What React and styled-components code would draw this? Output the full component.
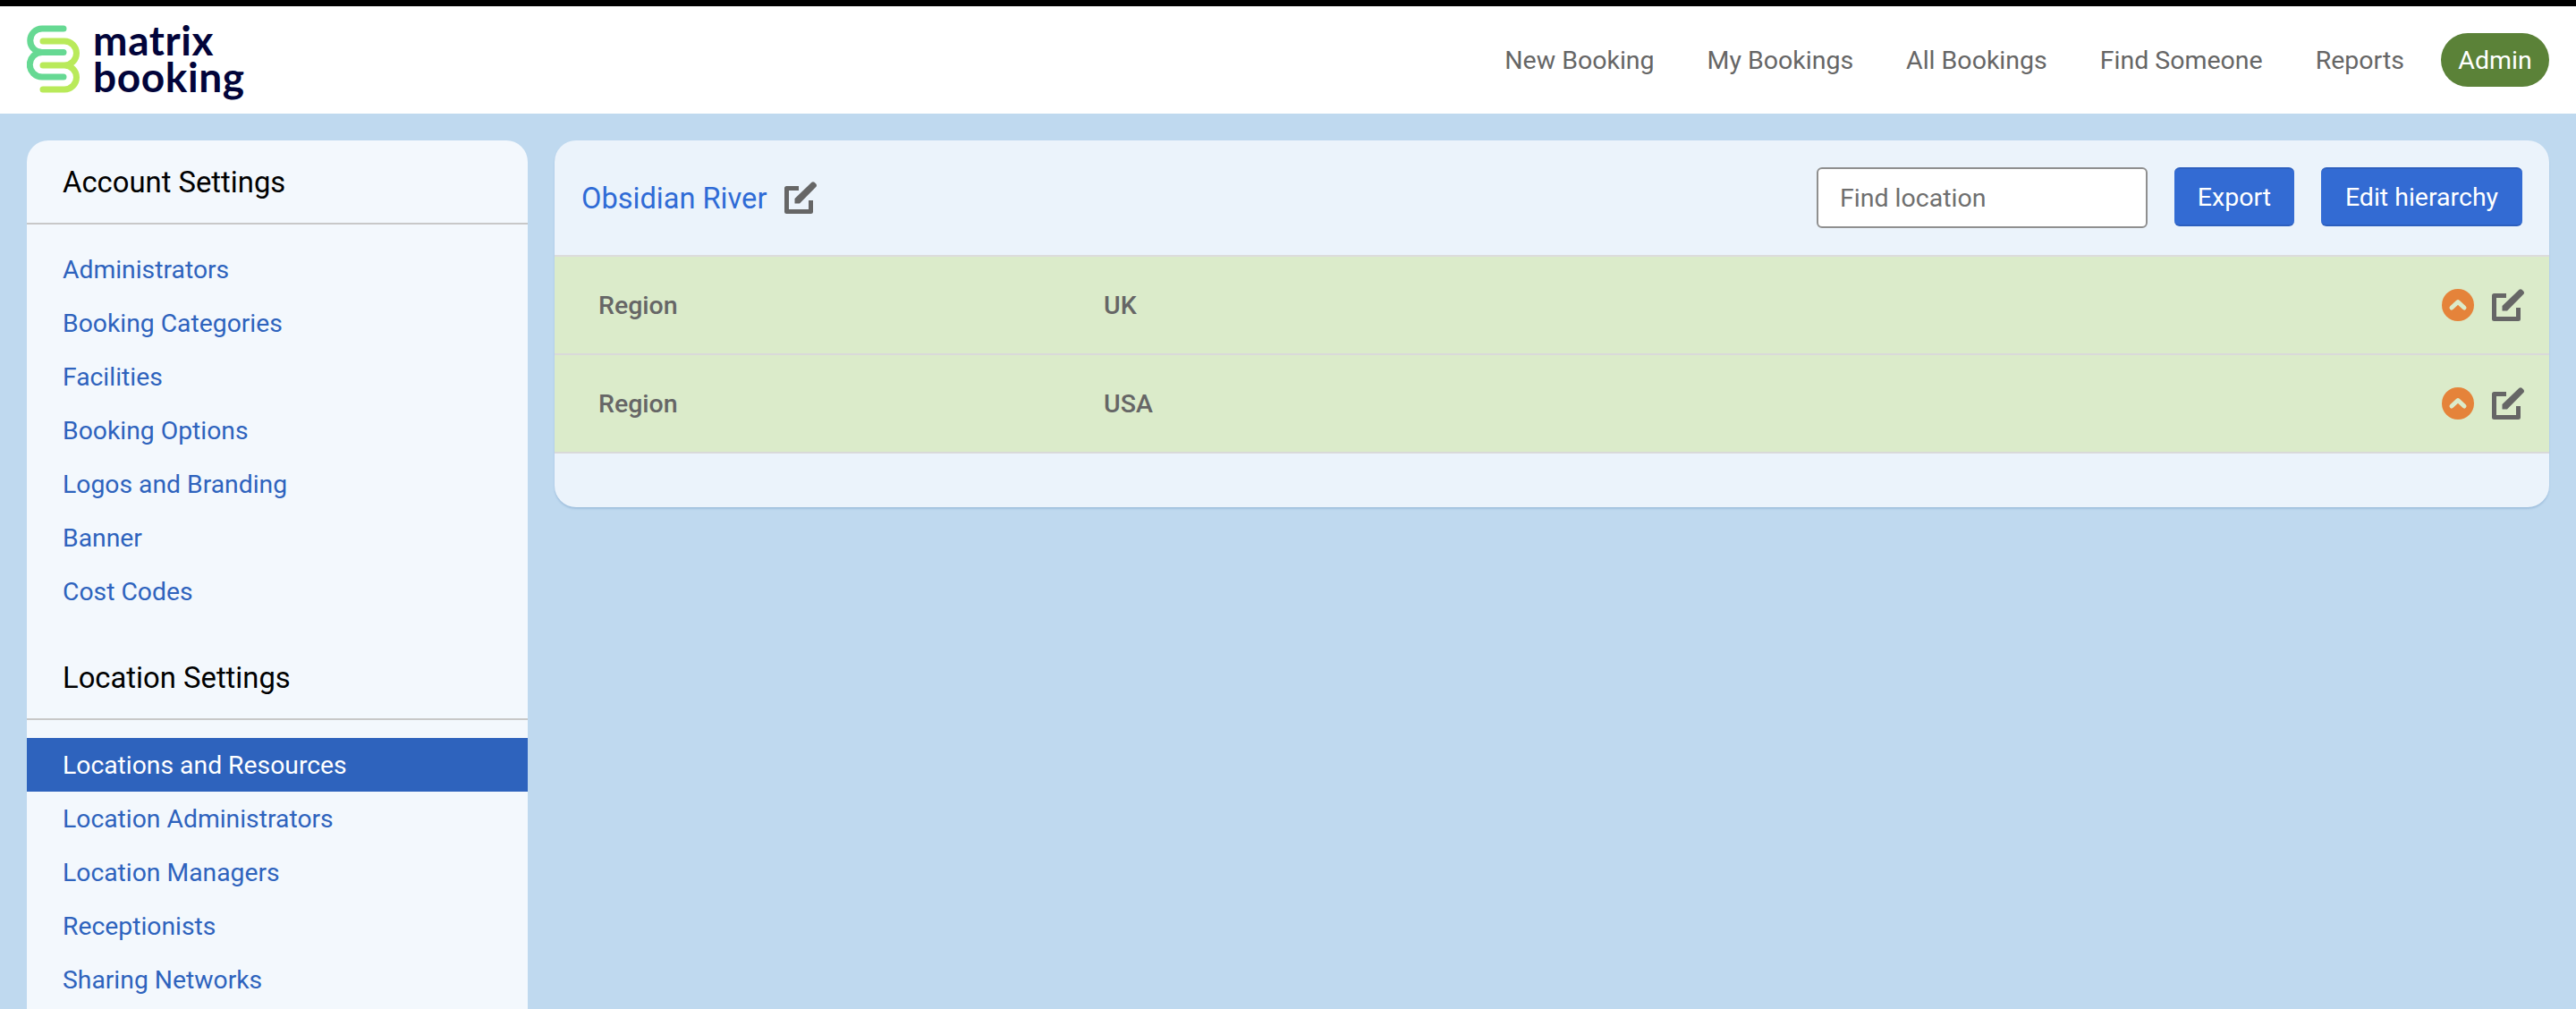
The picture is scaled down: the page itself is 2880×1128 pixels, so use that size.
import React from 'react'
import styled, { createGlobalStyle } from 'styled-components'

const GlobalStyle = createGlobalStyle`
  html, body { margin: 0; padding: 0; height: 100%; overflow: hidden; }
  body { font-family: Roboto, "Liberation Sans", sans-serif; background: #bfd9ef; }
  * { box-sizing: border-box; }
`

const Page = styled.div`
  height: 1128px;
  overflow: hidden;
  border-top: 7px solid #000;
  background: #bfd9ef;
`

const Header = styled.header`
  height: 120px;
  background: #fff;
  display: flex;
  align-items: center;
  justify-content: space-between;
  padding: 0 30px;
`

const Logo = styled.div`
  display: flex;
  align-items: center;
  gap: 14px;
`

const LogoMark = styled.svg`
  width: 60px;
  height: 84px;
  display: block;
`

const LogoText = styled.div`
  font-family: Lato, sans-serif;
  font-weight: 700;
  font-size: 46px;
  line-height: 41px;
  letter-spacing: 0.6px;
  color: #02043a;
  padding-bottom: 4px;
`

const Nav = styled.nav`
  display: flex;
  align-items: center;
  height: 60px;
  gap: 59px;
`

const NavLink = styled.a`
  font-size: 28.5px;
  color: #666;
`

const AdminPill = styled.a`
  height: 60px;
  width: 121px;
  margin-left: -18px;
  border-radius: 30px;
  background: #5b8238;
  color: #fff;
  font-size: 28.5px;
  display: flex;
  align-items: center;
  justify-content: center;
`

const Body = styled.div`
  display: flex;
  align-items: flex-start;
  gap: 30px;
  padding: 30px;
`

const Sidebar = styled.aside`
  width: 560px;
  flex: none;
  background: #f3f8fd;
  border-radius: 24px 24px 0 0;
  padding-bottom: 40px;
`

const SectionTitle = styled.h2`
  margin: 0;
  height: 94px;
  padding: 2px 40px 0;
  display: flex;
  align-items: center;
  font-size: 32.8px;
  font-weight: 400;
  color: #000;
  border-bottom: 2px solid #c8c8c8;
`

const SideList = styled.div`
  display: flex;
  flex-direction: column;
  padding: 20px 0;
`

const SideItem = styled.a`
  height: 60px;
  padding: 0 40px;
  display: flex;
  align-items: center;
  font-size: 28.3px;
  color: ${p => (p.$active ? '#fff' : '#2e63bd')};
  background: ${p => (p.$active ? '#2e63bd' : 'transparent')};
`

const Panel = styled.main`
  flex: 1;
  background: #ebf3fb;
  border-radius: 24px;
  overflow: hidden;
  padding-bottom: 60px;
  box-shadow: 0 2px 2px rgba(70, 120, 170, 0.25);
`

const PanelHead = styled.div`
  height: 130px;
  display: flex;
  align-items: center;
  padding: 0 30px;
  border-bottom: 2px solid #dcdcdc;
`

const Title = styled.a`
  font-size: 32.6px;
  padding-top: 1px;
  color: #2f6bd6;
  margin-right: 20px;
`

const Tools = styled.div`
  margin-left: auto;
  display: flex;
  align-items: flex-start;
  gap: 30px;
`

const Search = styled.input`
  width: 370px;
  height: 68px;
  border: 2px solid #8f8f8f;
  border-radius: 6px;
  background: #fff;
  padding: 0 24px;
  font-family: inherit;
  font-size: 28.5px;
  color: #666;
  &::placeholder { color: #6f6f6f; opacity: 1; }
`

const Button = styled.button`
  height: 66px;
  width: ${p => p.$width}px;
  padding: 0;
  border: 0;
  border-top: 2px solid #2c5fbf;
  border-bottom: 2px solid #2c5fbf;
  border-radius: 6px;
  background: #336bd3;
  color: #fff;
  font-family: inherit;
  font-size: 28.5px;
`

const Row = styled.div`
  height: 110px;
  background: #dbebca;
  display: grid;
  grid-template-columns: 565px 1fr auto;
  align-items: center;
  padding: 0 28px 0 49px;
  border-bottom: 2px solid #d9d9d9;
  color: #666;
  font-size: 28.5px;
  font-weight: 500;
`

const RowActions = styled.div`
  display: flex;
  align-items: center;
  gap: 20px;
`

const CollapseBadge = styled.svg`
  width: 36px;
  height: 36px;
  display: block;
`

const EditGlyph = styled.svg`
  width: 36px;
  height: 36px;
  display: block;
`

const EditIcon = () => (
  <EditGlyph viewBox="0 0 36 36">
    <path d="M16 7.5H2.5V33.5H29.5V21" fill="none" stroke="#666" strokeWidth="5" strokeLinejoin="round" />
    <path d="M11.5 19L30.5.8q1.5-1 3 0l2 2q1 1.5 0 3L17 24.5H12q-.5 0-.5-.5z" fill="#666" />
  </EditGlyph>
)

const CollapseIcon = () => (
  <CollapseBadge viewBox="0 0 36 36">
    <circle cx="18" cy="18" r="18" fill="#e5833a" />
    <path d="M11 21l7-6.5 7 6.5" fill="none" stroke="#dbebca" strokeWidth="5" strokeLinecap="round" strokeLinejoin="round" />
  </CollapseBadge>
)

const accountLinks = ['Administrators', 'Booking Categories', 'Facilities', 'Booking Options', 'Logos and Branding', 'Banner', 'Cost Codes']
const locationLinks = ['Locations and Resources', 'Location Administrators', 'Location Managers', 'Receptionists', 'Sharing Networks']
const navLinks = ['New Booking', 'My Bookings', 'All Bookings', 'Find Someone', 'Reports']
const regions = ['UK', 'USA']

export default function App() {
  return (
    <Page>
      <GlobalStyle />
      <Header>
        <Logo>
          <LogoMark viewBox="0 0 60 84">
            <path d="M41 7H17A13.25 13.25 0 0 0 17 33.5H41M41 33.5H17A13.75 13.75 0 0 0 17 61H41" fill="none" stroke="#66d993" strokeWidth="7" strokeLinecap="round" />
            <path d="M18 21H42A13.5 13.5 0 0 1 42 48H18M42 48A13.5 13.5 0 0 1 42 75H18" fill="none" stroke="#b9ea5a" strokeWidth="7" strokeLinecap="round" />
          </LogoMark>
          <LogoText>matrix<br />booking</LogoText>
        </Logo>
        <Nav>
          {navLinks.map(item => <NavLink key={item}>{item}</NavLink>)}
          <AdminPill>Admin</AdminPill>
        </Nav>
      </Header>
      <Body>
        <Sidebar>
          <SectionTitle>Account Settings</SectionTitle>
          <SideList>
            {accountLinks.map(item => <SideItem key={item}>{item}</SideItem>)}
          </SideList>
          <SectionTitle>Location Settings</SectionTitle>
          <SideList>
            {locationLinks.map((item, i) => <SideItem key={item} $active={i === 0}>{item}</SideItem>)}
          </SideList>
        </Sidebar>
        <Panel>
          <PanelHead>
            <Title>Obsidian River</Title>
            <EditIcon />
            <Tools>
              <Search placeholder="Find location" />
              <Button $width={134}>Export</Button>
              <Button $width={225}>Edit hierarchy</Button>
            </Tools>
          </PanelHead>
          {regions.map(name => (
            <Row key={name}>
              <span>Region</span>
              <span>{name}</span>
              <RowActions>
                <CollapseIcon />
                <EditIcon />
              </RowActions>
            </Row>
          ))}
        </Panel>
      </Body>
    </Page>
  )
}
